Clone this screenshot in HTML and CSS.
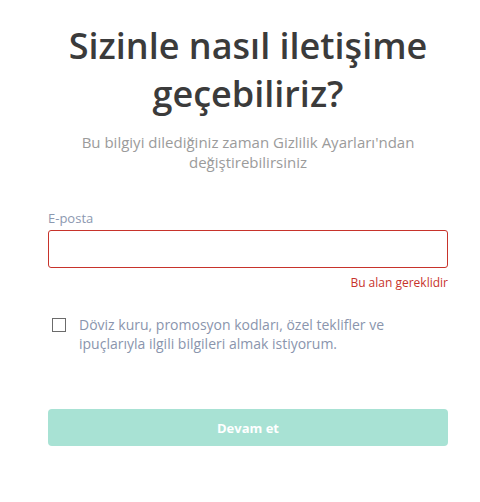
FILE: index.html
```html
<!DOCTYPE html>
<html lang="tr">
<head>
<meta charset="utf-8">
<link rel="stylesheet" href="styles.css">
</head>
<body>
<main class="page">
  <h1 class="title">Sizinle nasıl iletişime geçebiliriz?</h1>
  <p class="subtitle">Bu bilgiyi dilediğiniz zaman Gizlilik Ayarları'ndan değiştirebilirsiniz</p>
  <form class="form">
    <div class="field">
      <label class="label" for="email">E-posta</label>
      <input class="input" id="email" type="email">
      <div class="error">Bu alan gereklidir</div>
    </div>
    <label class="check">
      <span class="box"></span>
      <span class="check-text">Döviz kuru, promosyon kodları, özel teklifler ve ipuçlarıyla ilgili bilgileri almak istiyorum.</span>
    </label>
    <button class="btn" type="button">Devam et</button>
  </form>
</main>
</body>
</html>
```
FILE: styles.css
```css
* { box-sizing: border-box; }
html, body { margin: 0; background: #fff; }
body { font-family: "Open Sans", "Noto Sans", sans-serif; }
.page {
  width: 400px;
  margin: 0 0 0 48px;
  padding-top: 22px;
  display: flex;
  flex-direction: column;
}
.title {
  margin: 0;
  font-size: 36px;
  line-height: 48px;
  font-weight: 600;
  color: #3b3b3b;
  text-align: center;
  padding: 0 20px;
}
.subtitle {
  margin: 14px 0 0;
  font-size: 15px;
  line-height: 20px;
  color: #9b9b9b;
  text-align: center;
  padding: 0 10px;
}
.form { display: flex; flex-direction: column; margin-top: 38px; }
.field { display: flex; flex-direction: column; }
.label { font-size: 13px; line-height: 16px; color: #8c98b0; margin-bottom: 4px; }
.input {
  height: 38px;
  border: 1px solid #c7332b;
  border-radius: 3px;
  outline: none;
  font: inherit;
}
.error {
  text-align: right;
  font-size: 12px;
  line-height: 16px;
  color: #c7332b;
  margin-top: 7px;
}
.check {
  display: flex;
  gap: 13px;
  margin-top: 24px;
  padding-left: 4px;
  align-items: flex-start;
}
.box {
  flex: none;
  width: 14px;
  height: 14px;
  border: 1.5px solid #6b6b6b;
  margin-top: 3px;
}
.check-text { font-size: 14px; line-height: 19px; color: #8a95ad; }
.btn {
  margin-top: 56px;
  height: 37px;
  border: 0;
  border-radius: 4px;
  background: #a8e2d4;
  color: #fff;
  font: inherit;
  font-size: 13px;
  font-weight: 700;
}
```
